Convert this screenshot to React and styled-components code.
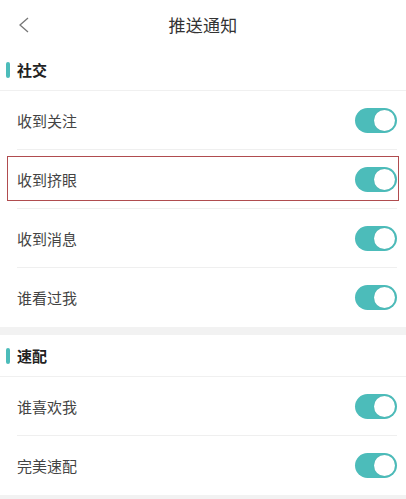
import { useState } from 'react';
import styled, { createGlobalStyle } from 'styled-components';

const GlobalStyle = createGlobalStyle`
  * { box-sizing: border-box; }
  body {
    margin: 0;
    background: #fff;
    font-family: "Noto Sans CJK SC", "Noto Sans", sans-serif;
  }
`;

const sections = [
  {
    title: '社交',
    items: [
      { key: 'follow', label: '收到关注' },
      { key: 'wink', label: '收到挤眼', highlighted: true },
      { key: 'message', label: '收到消息' },
      { key: 'visitor', label: '谁看过我' },
    ],
  },
  {
    title: '速配',
    items: [
      { key: 'like', label: '谁喜欢我' },
      { key: 'match', label: '完美速配' },
    ],
  },
];

const App = () => {
  const [enabled, setEnabled] = useState({
    follow: true,
    wink: true,
    message: true,
    visitor: true,
    like: true,
    match: true,
  });

  const toggle = (key) => setEnabled((prev) => ({ ...prev, [key]: !prev[key] }));

  return (
    <Layout>
      <GlobalStyle />
      <Header>
        <BackButton aria-label="back">
          <svg width="12" height="16" viewBox="0 0 12 16" fill="none">
            <path d="M10 1L2 8l8 7" stroke="#777" strokeWidth="1.3" strokeLinejoin="miter" />
          </svg>
        </BackButton>
        <Title>推送通知</Title>
      </Header>
      {sections.map((section) => (
        <Section key={section.title}>
          <SectionHeader>
            <Marker />
            <SectionTitle>{section.title}</SectionTitle>
          </SectionHeader>
          {section.items.map((item) => (
            <Row key={item.key} $highlighted={item.highlighted}>
              <RowLabel>{item.label}</RowLabel>
              <Switch $on={enabled[item.key]} onClick={() => toggle(item.key)}>
                <Knob $on={enabled[item.key]} />
              </Switch>
            </Row>
          ))}
        </Section>
      ))}
    </Layout>
  );
};

export default App;

const Layout = styled.div`
  width: 406px;
  min-height: 499px;
  background: #fff;
`;

const Header = styled.div`
  position: relative;
  display: flex;
  align-items: center;
  justify-content: center;
  height: 49px;
`;

const BackButton = styled.button`
  position: absolute;
  left: 14px;
  top: 16px;
  width: 20px;
  height: 18px;
  padding: 0;
  border: none;
  background: none;
  display: flex;
  align-items: center;
  justify-content: center;
`;

const Title = styled.div`
  font-size: 17px;
  color: #333;
  letter-spacing: 0.2px;
`;

const Section = styled.div`
  border-bottom: 8px solid #f2f2f2;
`;

const SectionHeader = styled.div`
  display: flex;
  align-items: center;
  height: 42px;
  padding-left: 6px;
  border-bottom: 1px solid #f0f0f0;
`;

const Marker = styled.div`
  width: 4px;
  height: 16px;
  border-radius: 2px;
  background: #4cbcba;
  margin-right: 7px;
`;

const SectionTitle = styled.div`
  font-size: 15px;
  font-weight: 700;
  color: #222;
`;

const Row = styled.div`
  position: relative;
  display: flex;
  align-items: center;
  justify-content: space-between;
  height: 59px;
  padding: 0 9px 0 17px;

  &:not(:last-child)::before {
    content: '';
    position: absolute;
    left: 17px;
    right: 9px;
    bottom: 0;
    height: 1px;
    background: #efefef;
  }

  ${({ $highlighted }) =>
    $highlighted &&
    `
    &::after {
      content: '';
      position: absolute;
      left: 7px;
      right: 7px;
      top: 6px;
      bottom: 8px;
      border: 1px solid #b04c4f;
      pointer-events: none;
    }
  `}
`;

const RowLabel = styled.div`
  font-size: 15px;
  color: #444;
`;

const Switch = styled.button`
  position: relative;
  width: 42px;
  height: 25px;
  padding: 0;
  border: none;
  border-radius: 13px;
  background: ${({ $on }) => ($on ? '#4cbcba' : '#e5e5e5')};
  cursor: pointer;
`;

const Knob = styled.span`
  position: absolute;
  top: 2px;
  left: ${({ $on }) => ($on ? '19px' : '2px')};
  width: 21px;
  height: 21px;
  border-radius: 50%;
  background: #fff;
  box-shadow: 0 0 1px rgba(0, 0, 0, 0.15);
`;
